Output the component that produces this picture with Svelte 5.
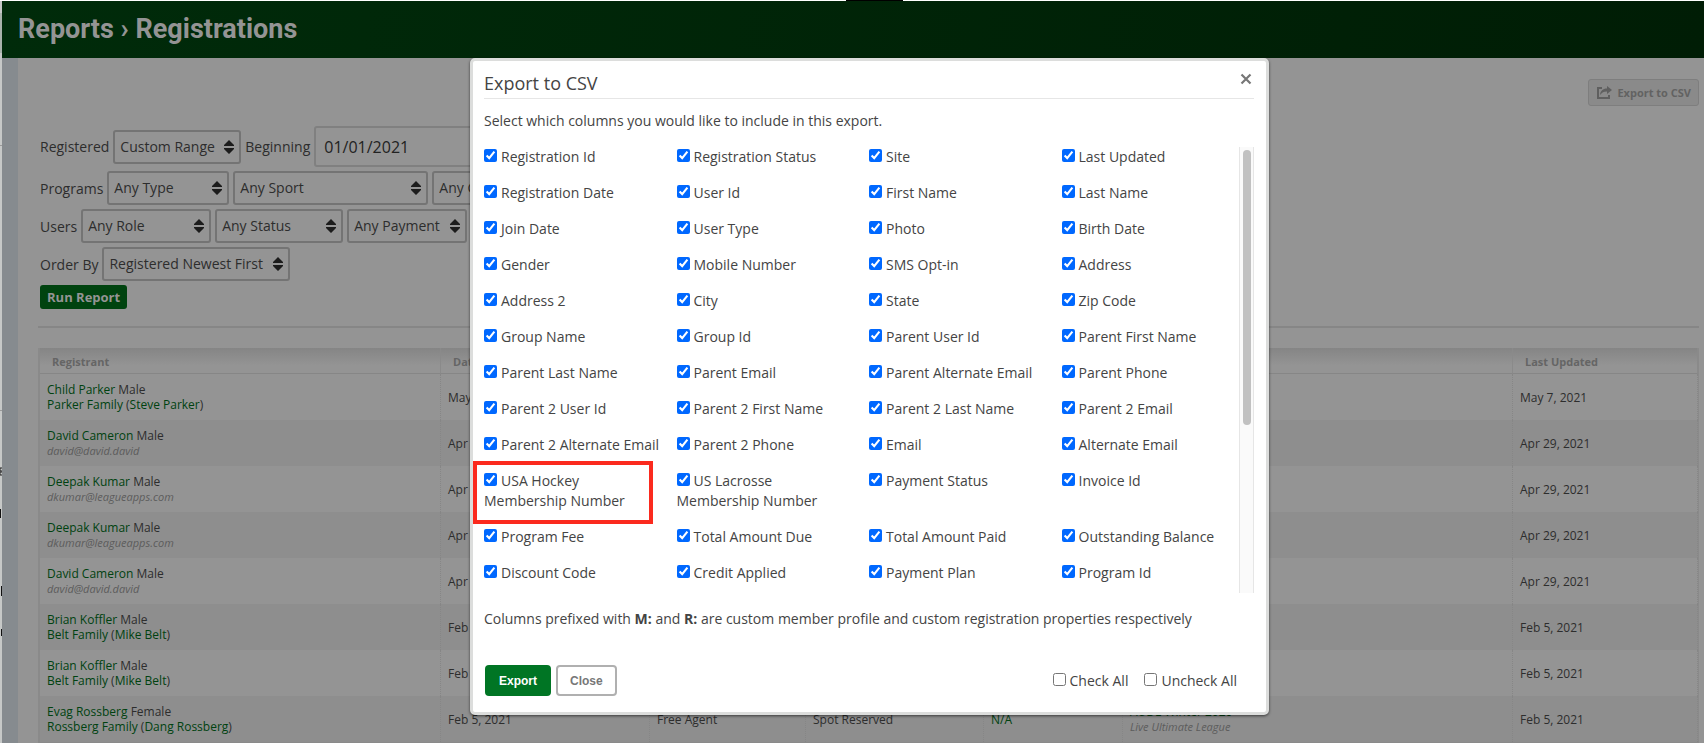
<script>
  const filterRows = [
    {
      label: 'Registered',
      id: 'registered',
      selects: [{ value: 'Custom Range', width: 128 }],
      beginning: '01/01/2021'
    },
    {
      label: 'Programs',
      id: 'programs',
      selects: [
        { value: 'Any Type', width: 122 },
        { value: 'Any Sport', width: 195 },
        { value: 'Any Category', width: 150 }
      ]
    },
    {
      label: 'Users',
      id: 'users',
      selects: [
        { value: 'Any Role', width: 130 },
        { value: 'Any Status', width: 128 },
        { value: 'Any Payment', width: 120 }
      ]
    },
    {
      label: 'Order By',
      id: 'order',
      selects: [{ value: 'Registered Newest First', width: 188 }]
    }
  ];

  const registrants = [
    { name: 'Child Parker', gender: 'Male', family: 'Parker Family', contact: 'Steve Parker', date: 'May 7, 2021' },
    { name: 'David Cameron', gender: 'Male', email: 'david@david.david', date: 'Apr 29, 2021' },
    { name: 'Deepak Kumar', gender: 'Male', email: 'dkumar@leagueapps.com', date: 'Apr 29, 2021' },
    { name: 'Deepak Kumar', gender: 'Male', email: 'dkumar@leagueapps.com', date: 'Apr 29, 2021' },
    { name: 'David Cameron', gender: 'Male', email: 'david@david.david', date: 'Apr 29, 2021' },
    { name: 'Brian Koffler', gender: 'Male', family: 'Belt Family', contact: 'Mike Belt', date: 'Feb 5, 2021' },
    { name: 'Brian Koffler', gender: 'Male', family: 'Belt Family', contact: 'Mike Belt', date: 'Feb 5, 2021' },
    {
      name: 'Evag Rossberg',
      gender: 'Female',
      family: 'Rossberg Family',
      contact: 'Dang Rossberg',
      date: 'Feb 5, 2021',
      role: 'Free Agent',
      status: 'Spot Reserved',
      payment: 'N/A',
      program: 'AUDL Winter 2020',
      league: 'Live Ultimate League'
    }
  ];

  const highlighted = 'USA Hockey Membership Number';
  let columns = $state(
    [
      'Registration Id', 'Registration Status', 'Site', 'Last Updated',
      'Registration Date', 'User Id', 'First Name', 'Last Name',
      'Join Date', 'User Type', 'Photo', 'Birth Date',
      'Gender', 'Mobile Number', 'SMS Opt-in', 'Address',
      'Address 2', 'City', 'State', 'Zip Code',
      'Group Name', 'Group Id', 'Parent User Id', 'Parent First Name',
      'Parent Last Name', 'Parent Email', 'Parent Alternate Email', 'Parent Phone',
      'Parent 2 User Id', 'Parent 2 First Name', 'Parent 2 Last Name', 'Parent 2 Email',
      'Parent 2 Alternate Email', 'Parent 2 Phone', 'Email', 'Alternate Email',
      highlighted, 'US Lacrosse Membership Number', 'Payment Status', 'Invoice Id',
      'Program Fee', 'Total Amount Due', 'Total Amount Paid', 'Outstanding Balance',
      'Discount Code', 'Credit Applied', 'Payment Plan', 'Program Id'
    ].map((name) => ({ name, checked: true }))
  );

  function setAll(checked) {
    columns.forEach((c) => (c.checked = checked));
  }
</script>

<div class="page">
  <div class="topline"><span></span></div>
  <div class="body">
    <svg class="edge" width="2" height="742" aria-hidden="true">
      <rect width="2" height="742" fill="#c6c8c7" />
      <rect y="12" width="2" height="40" fill="#a9b3ac" />
      <rect y="144" width="2" height="1" fill="#9a9a9a" />
      <rect y="409" width="2" height="1" fill="#9a9a9a" />
      <path d="M2 467H0v3h2M2 471H0v3h2" fill="none" stroke="#222" />
      <rect y="508" width="1" height="9" fill="#111" />
      <rect x="1" y="585" width="1" height="10" fill="#111" />
      <rect x="1" y="628" width="1" height="7" fill="#111" />
    </svg>
    <div class="app">
      <header><h1>Reports › Registrations</h1></header>
      <main>
        <div class="actions">
          <button class="csv">
            <svg width="15" height="13" viewBox="0 0 15 13" aria-hidden="true">
              <path d="M5 2H1v10h11V9" fill="none" stroke="#5f5f5f" stroke-width="2" />
              <path d="M3 9c.4-4 2.800-6.500 7-6.500V0l5 4-5 4V5.500C7 5.400 5 6.300 3 9z" fill="#5f5f5f" />
            </svg>
            Export to CSV
          </button>
        </div>
        <form class="filters" onsubmit={(e) => e.preventDefault()}>
          {#each filterRows as row}
            <div class="filter-row">
              <label for={row.id}>{row.label}</label>
              {#each row.selects as s, i}
                <select id={i === 0 ? row.id : `${row.id}-${i}`} aria-label={i === 0 ? undefined : s.value} style:width="{s.width}px">
                  <option>{s.value}</option>
                </select>
              {/each}
              {#if row.beginning}
                <label for="beginning">Beginning</label>
                <input id="beginning" type="text" value={row.beginning} />
              {/if}
            </div>
          {/each}
          <button class="run">Run Report</button>
        </form>
        <hr />
        <table>
          <colgroup>
            <col class="c-name" /><col class="c-date" /><col class="c-role" /><col class="c-status" />
            <col class="c-pay" /><col /><col class="c-updated" />
          </colgroup>
          <thead>
            <tr><th>Registrant</th><th>Date</th><th></th><th></th><th></th><th></th><th>Last Updated</th></tr>
          </thead>
          <tbody>
            {#each registrants as r}
              <tr>
                <td>
                  <a href="#registrant">{r.name}</a> {r.gender}<br />
                  {#if r.email}
                    <em>{r.email}</em>
                  {:else}
                    <a href="#family">{r.family}</a> (<a href="#contact">{r.contact}</a>)
                  {/if}
                </td>
                <td>{r.date}</td>
                <td>{r.role ?? ''}</td>
                <td>{r.status ?? ''}</td>
                <td>{#if r.payment}<a href="#payment">{r.payment}</a>{/if}</td>
                <td>{#if r.program}<a href="#program">{r.program}</a><br /><em>{r.league}</em>{/if}</td>
                <td>{r.date}</td>
              </tr>
            {/each}
          </tbody>
        </table>
      </main>
    </div>
  </div>

  <div class="overlay">
    <div class="modal" role="dialog" aria-modal="true" aria-labelledby="modal-title">
      <div class="modal-head">
        <h2 id="modal-title">Export to CSV</h2>
        <button class="dismiss" aria-label="Dismiss">
          <svg width="12" height="12" viewBox="0 0 12 12" aria-hidden="true">
            <path d="M1.500 1.500l9 9M10.500 1.500l-9 9" stroke="#777" stroke-width="2.200" />
          </svg>
        </button>
      </div>
      <p class="intro">Select which columns you would like to include in this export.</p>
      <div class="list">
        <div class="grid">
          {#each columns as c}
            <label class="item">
              <input type="checkbox" bind:checked={c.checked} />{c.name}
              {#if c.name === highlighted}<span class="mark"></span>{/if}
            </label>
          {/each}
        </div>
        <div class="track"><div class="thumb"></div></div>
      </div>
      <p class="note">
        Columns prefixed with <b>M:</b> and <b>R:</b> are custom member profile and custom registration properties respectively
      </p>
      <div class="modal-foot">
        <button class="primary">Export</button>
        <button class="secondary">Close</button>
        <div class="toggles">
          <label><input type="checkbox" onchange={() => setAll(true)} />Check All</label>
          <label><input type="checkbox" onchange={() => setAll(false)} />Uncheck All</label>
        </div>
      </div>
    </div>
  </div>
</div>

<style>
  :global(body) {
    margin: 0;
    overflow: hidden;
    background: #949494;
  }
  .page {
    position: relative;
    height: 100vh;
    overflow: hidden;
    font: 14px/20px 'Open Sans', sans-serif;
    color: #2d2d2d;
  }
  button, select, input {
    box-sizing: border-box;
    font-family: inherit;
  }
  .topline {
    height: 1px;
    background: #fff;
    display: flex;
    justify-content: center;
  }
  .topline span {
    width: 57px;
    margin-left: 44px;
    background: #000;
  }
  .body {
    display: flex;
  }
  .edge {
    flex: none;
    display: block;
  }
  .app {
    flex: 1;
    min-width: 0;
  }
  header {
    height: 57px;
    box-sizing: border-box;
    display: flex;
    align-items: center;
    padding: 0 16px 2px;
    background: linear-gradient(100deg, #002b0a, #001d05);
  }
  h1 {
    margin: 0;
    font: 700 27px/32px Roboto, sans-serif;
    color: #949494;
  }
  main {
    border-left: 16px solid #868b8f;
    padding: 21px 5px 0 20px;
    background: #949494;
  }
  .actions {
    display: flex;
    justify-content: flex-end;
  }
  .csv {
    height: 27px;
    display: flex;
    align-items: center;
    gap: 5px;
    padding: 0 7px 0 8px;
    border: 1px solid #7e7e7e;
    border-radius: 3px;
    background: #8a8a8a;
    color: #626262;
    font-size: 11px;
    font-weight: 700;
  }
  .filters {
    display: flex;
    flex-direction: column;
    align-items: flex-start;
    gap: 4px;
    margin: 20px 2px 17px;
  }
  .filter-row {
    display: flex;
    align-items: center;
    gap: 4px;
  }
  .filter-row label {
    padding-top: 1px;
  }
  select {
    appearance: none;
    height: 34px;
    padding: 0 20px 1px 5px;
    border: 2px solid #747474;
    border-radius: 3px;
    color: #2d2d2d;
    font-size: 14px;
    background: #949494 url("data:image/svg+xml,%3Csvg xmlns='http://www.w3.org/2000/svg' width='10' height='14'%3E%3Cpath d='M5 0l5 5v1H0V5zM0 8h10v1l-5 5-5-5z' fill='%231c1c1c'/%3E%3C/svg%3E") no-repeat right 5px center;
  }
  #beginning {
    width: 180px;
    height: 41px;
    padding: 0 8px;
    border: 2px solid #808080;
    border-radius: 3px;
    background: #949494;
    color: #222;
    font-size: 16px;
  }
  .run {
    height: 24px;
    padding: 0 7px;
    border: 0;
    border-radius: 3px;
    background: #00430f;
    color: #949494;
    font-size: 13px;
    font-weight: 700;
  }
  hr {
    height: 2px;
    margin: 0 0 20px;
    border: 0;
    background: #868686;
  }
  table {
    width: 100%;
    table-layout: fixed;
    border-collapse: separate;
    border-spacing: 0;
    box-sizing: border-box;
    border: solid #8a8a8a;
    border-width: 0 1px 1px 2px;
    font-size: 12px;
    line-height: 15px;
  }
  .c-name { width: 401px; }
  .c-date { width: 209px; }
  .c-role { width: 156px; }
  .c-status { width: 178px; }
  .c-pay { width: 139px; }
  .c-updated { width: 185px; }
  th {
    height: 26px;
    box-sizing: border-box;
    padding: 2px 12px 0;
    text-align: left;
    font-size: 11px;
    color: #656565;
    border-bottom: 1px solid #868686;
    border-right: 1px solid #8a8a8a;
    background: linear-gradient(#858585, #949494 70%);
  }
  td {
    height: 46px;
    box-sizing: border-box;
    padding: 1px 7px;
    border-right: 1px dotted #868686;
    white-space: nowrap;
  }
  tbody tr:nth-child(even) {
    background: #8e8e8e;
  }
  a {
    color: #004210;
    text-decoration: none;
  }
  em {
    font-size: 11px;
    color: #5c5c5c;
  }
  .overlay {
    position: absolute;
    inset: 0;
    display: flex;
    justify-content: center;
    align-items: flex-start;
    padding: 58px 0 0 35px;
  }
  .modal {
    box-sizing: border-box;
    width: 799px;
    padding: 12px 12px 16px 11px;
    border: 3px solid #dcdddc;
    border-radius: 5px;
    background: #fff;
    color: #444;
    box-shadow: 0 1px 3px rgba(0, 0, 0, 0.6);
  }
  .modal-head {
    display: flex;
    justify-content: space-between;
    align-items: flex-start;
    height: 25px;
    border-bottom: 1px solid #e6e6e6;
  }
  h2 {
    margin: 0;
    font-size: 18px;
    font-weight: 400;
    line-height: 20px;
  }
  .dismiss {
    display: flex;
    padding: 0 2px;
    border: 0;
    background: none;
  }
  p {
    margin: 0;
  }
  .intro {
    margin: 12px 0 16px;
  }
  .list {
    position: relative;
    height: 446px;
    margin-left: -11px;
    padding-left: 11px;
    overflow: hidden;
  }
  .grid {
    display: grid;
    grid-template-columns: repeat(4, 1fr);
    row-gap: 16px;
  }
  .item {
    position: relative;
    padding-right: 12px;
  }
  input[type='checkbox'] {
    width: 13px;
    height: 13px;
    margin: 0 4px 0 0;
    accent-color: #0068ff;
  }
  .mark {
    position: absolute;
    inset: -10px 24px -13px -11px;
    border: 4px solid #fb2a1e;
  }
  .track {
    position: absolute;
    top: 0;
    right: 0;
    bottom: 0;
    box-sizing: border-box;
    width: 15px;
    padding: 3px 3px 0;
    border: solid #e6e6e6;
    border-width: 0 1px;
    background: #fafafa;
  }
  .thumb {
    width: 8px;
    height: 275px;
    border-radius: 4px;
    background: #c1c1c1;
  }
  .note {
    margin: 16px 0 36px;
  }
  .modal-foot {
    display: flex;
    align-items: center;
    gap: 5px;
    padding: 0 17px 0 1px;
  }
  .modal-foot button {
    height: 31px;
    border-radius: 4px;
    font: 700 12px 'Liberation Sans', sans-serif;
  }
  .primary {
    padding: 0 14px;
    border: 0;
    background: #007524;
    color: #fff;
  }
  .secondary {
    padding: 0 12px;
    border: 2px solid #b0b0b0;
    background: #fff;
    color: #777;
  }
  .toggles {
    display: flex;
    gap: 16px;
    margin-left: auto;
  }
</style>
